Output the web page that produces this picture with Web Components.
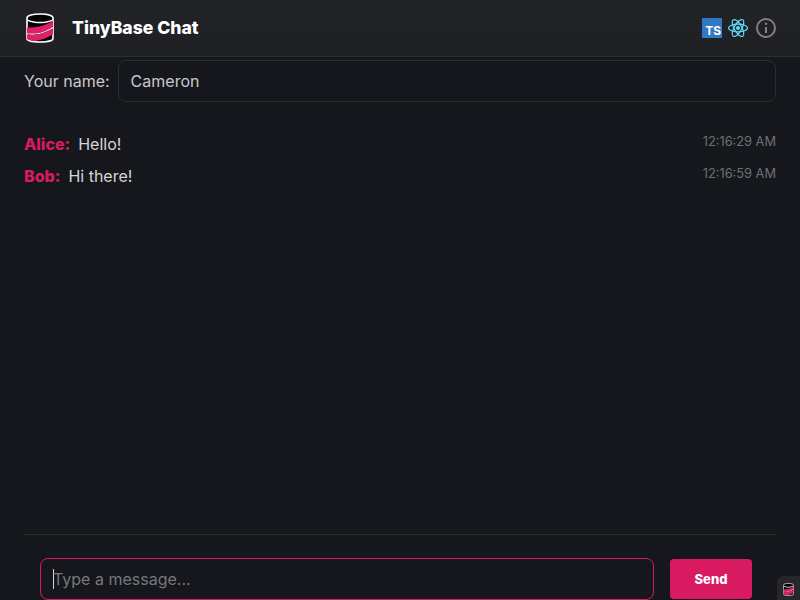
<!DOCTYPE html>
<html lang="en">
<head>
<meta charset="utf-8">
<title>TinyBase Chat</title>
<style>
  html, body { margin: 0; height: 100%; background: #15171c; overflow: hidden; }
  body { font: 16px/24px Inter, "Liberation Sans", sans-serif; color: #d5d5d8; }
</style>
</head>
<body>
<chat-app>
  <app-header slot="header">TinyBase Chat</app-header>
  <name-row slot="name" value="Cameron">Your name:</name-row>
  <chat-message who="Alice" time="12:16:29 AM">Hello!</chat-message>
  <chat-message who="Bob" time="12:16:59 AM">Hi there!</chat-message>
  <message-form slot="form">Type a message...</message-form>
</chat-app>
<inspector-tab></inspector-tab>

<script>
const logo = `
  <svg viewBox="0 0 28 30" width="100%" height="100%" preserveAspectRatio="none" style="display:block" aria-hidden="true">
    <path d="M1 5C1 2.500 7 1 14 1s13 1.500 13 4v20.500c0 2.200-6 3.500-13 3.500S1 27.700 1 25.500z" fill="#000" stroke="#fff" stroke-width="1.600"/>
    <path d="M1.500 6.500C5 8.300 9.500 8.800 14 8.800s9-.5 12.500-2.300v1.500C23 9.800 18 10.300 14 10.300S5 9.800 1.500 8z" fill="#fff"/>
    <path d="M1 14.500c3 .2 6 .1 9-.4 6.500-1 12-3 17-6.100v6.200c-5 3.300-11 5.600-17 6.200-3 .2-6 .2-9 0z" fill="#e01f68"/>
    <path d="M10 20.400c-3 .2-6 .2-9 0v1.200c3 .2 6 .2 9-.1 6-.7 12-3 17-6.300v-1.300c-5 3.300-11 5.900-17 6.500z" fill="#fff"/>
    <path d="M1 21.600c3 .2 6 .2 9-.1 6-.7 12-3 17-6.300v6.100c-5 3.400-11 5.900-18 6.700-4.500-.3-8-1.500-8-2.800z" fill="#e01f68"/>
  </svg>`;

class ChatApp extends HTMLElement {
  connectedCallback() {
    this.attachShadow({ mode: 'open' });
    this.shadowRoot.innerHTML = `
      <style>
        :host { display: flex; flex-direction: column; height: 600px; }
        .messages {
          flex: 1;
          display: flex;
          flex-direction: column;
          gap: 8px;
          padding: 30px 24px 0;
          min-height: 0;
        }
      </style>
      <slot name="header"></slot>
      <slot name="name"></slot>
      <div class="messages"><slot></slot></div>
      <slot name="form"></slot>
    `;
  }
}

class AppHeader extends HTMLElement {
  connectedCallback() {
    this.attachShadow({ mode: 'open' });
    this.shadowRoot.innerHTML = `
      <style>
        :host {
          display: flex;
          align-items: center;
          box-sizing: border-box;
          height: 57px;
          padding: 0 24px 1px 26px;
          background: linear-gradient(#212327, #1f2024);
          border-bottom: 1px solid #2d2e32;
        }
        .logo { width: 28px; height: 30px; margin-right: 18px; }
        .title { flex: 1; font-weight: 800; font-size: 17.6px; color: #fff; }
        .icons { display: flex; align-items: center; gap: 4px; }
        .ts {
          box-sizing: border-box;
          width: 20px;
          height: 20px;
          margin-top: 1px;
          background: #3178c6;
          color: #fff;
          font: 700 12px/1 Inter, "Liberation Sans", sans-serif;
          display: flex;
          align-items: flex-end;
          justify-content: flex-end;
          padding: 0 1px 1px 0;
        }
      </style>
      <div class="logo">${logo}</div>
      <div class="title"><slot></slot></div>
      <div class="icons">
        <div class="ts">TS</div>
        <svg width="22" height="20" viewBox="0 0 22 20" fill="none" stroke="#61dafb" stroke-width="1.200" aria-hidden="true">
          <circle cx="12" cy="10" r="2.100" fill="#61dafb" stroke="none"/>
          <ellipse cx="12" cy="10" rx="9.500" ry="3.800"/>
          <ellipse cx="12" cy="10" rx="9.500" ry="3.800" transform="rotate(60 12 10)"/>
          <ellipse cx="12" cy="10" rx="9.500" ry="3.800" transform="rotate(120 12 10)"/>
        </svg>
        <svg style="margin-left:4px" width="20" height="20" viewBox="0 0 20 20" fill="none" stroke="#808084" aria-hidden="true">
          <circle cx="10" cy="10" r="9" stroke-width="2"/>
          <path d="M10 9v6" stroke-width="2"/>
          <circle cx="10" cy="5.800" r="1.200" fill="#808084" stroke="none"/>
        </svg>
      </div>
    `;
  }
}

class NameRow extends HTMLElement {
  connectedCallback() {
    this.attachShadow({ mode: 'open' });
    this.shadowRoot.innerHTML = `
      <style>
        :host {
          display: flex;
          align-items: center;
          gap: 8px;
          padding: 3px 24px 0;
          color: #c8c8cc;
        }
        .field {
          flex: 1;
          box-sizing: border-box;
          height: 42px;
          line-height: 40px;
          padding: 0 12px;
          border: 1px solid #2b2d31;
          border-radius: 8px;
          color: #c8c8cc;
        }
      </style>
      <span><slot></slot></span>
      <div class="field">${this.getAttribute('value')}</div>
    `;
  }
}

class ChatMessage extends HTMLElement {
  connectedCallback() {
    this.attachShadow({ mode: 'open' });
    this.shadowRoot.innerHTML = `
      <style>
        :host { display: flex; align-items: baseline; height: 24px; color: #d5d5d8; }
        b { font-weight: 800; color: #d81b60; margin-right: 8px; }
        .text { flex: 1; }
        time { font-size: 12.8px; color: #6f7075; position: relative; top: -4px; }
      </style>
      <b>${this.getAttribute('who')}:</b>
      <span class="text"><slot></slot></span>
      <time>${this.getAttribute('time')}</time>
    `;
  }
}

class MessageForm extends HTMLElement {
  connectedCallback() {
    this.attachShadow({ mode: 'open' });
    this.shadowRoot.innerHTML = `
      <style>
        :host {
          display: block;
          margin: 0 24px;
          padding: 23px 24px 0 16px;
          height: 42px;
          border-top: 1px solid #2d2e32;
        }
        .row { display: flex; gap: 16px; align-items: center; }
        .field {
          flex: 1;
          box-sizing: border-box;
          height: 42px;
          display: flex;
          align-items: center;
          padding: 0 12px;
          border: 1px solid #d81b60;
          border-radius: 8px;
          color: #77787c;
        }
        .caret { width: 1px; height: 20px; background: #d5d5d8; margin-right: -1px; }
        button {
          width: 82px;
          height: 40px;
          border: 0;
          border-radius: 4px;
          background: #d81b60;
          color: #fff;
          font: 800 13px Inter, "Liberation Sans", sans-serif;
        }
      </style>
      <div class="row">
        <div class="field"><span class="caret"></span><slot></slot></div>
        <button type="button">Send</button>
      </div>
    `;
  }
}

class InspectorTab extends HTMLElement {
  connectedCallback() {
    this.attachShadow({ mode: 'open' });
    this.shadowRoot.innerHTML = `
      <style>
        :host {
          position: fixed;
          right: 0;
          bottom: 0;
          box-sizing: border-box;
          width: 23px;
          height: 24px;
          padding: 7px 6px 4px;
          background: #26272b;
          border-radius: 6px 0 0 0;
        }
      </style>
      ${logo}
    `;
  }
}

customElements.define('chat-app', ChatApp);
customElements.define('app-header', AppHeader);
customElements.define('name-row', NameRow);
customElements.define('chat-message', ChatMessage);
customElements.define('message-form', MessageForm);
customElements.define('inspector-tab', InspectorTab);
</script>
</body>
</html>
